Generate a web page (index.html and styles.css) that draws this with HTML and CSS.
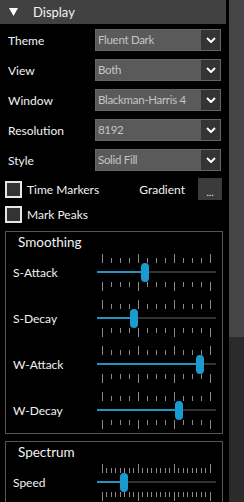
FILE: index.html
```html
<!DOCTYPE html>
<html lang="en">
<head>
    <meta charset="UTF-8">
    <meta name="viewport" content="width=device-width, initial-scale=1.0">
    <title>Display Settings</title>
    <link rel="stylesheet" href="styles.css">
</head>
<body>
    <div class="window">
        <div class="panel">
            <div class="section-header">
                <svg class="caret" width="9" height="9" viewBox="0 0 9 9"><polygon points="0,1 9,1 4.5,9" fill="#fff"/></svg>
                <span>Display</span>
            </div>

            <div class="settings">
                <div class="row">
                    <span class="label">Theme</span>
                    <div class="combo"><span class="combo-value">Fluent Dark</span><span class="combo-button"><svg width="10" height="6" viewBox="0 0 10 6"><polyline points="1,1 5,5 9,1" fill="none" stroke="#fff" stroke-width="2"/></svg></span></div>
                </div>
                <div class="row">
                    <span class="label">View</span>
                    <div class="combo"><span class="combo-value">Both</span><span class="combo-button"><svg width="10" height="6" viewBox="0 0 10 6"><polyline points="1,1 5,5 9,1" fill="none" stroke="#fff" stroke-width="2"/></svg></span></div>
                </div>
                <div class="row">
                    <span class="label">Window</span>
                    <div class="combo"><span class="combo-value">Blackman-Harris 4</span><span class="combo-button"><svg width="10" height="6" viewBox="0 0 10 6"><polyline points="1,1 5,5 9,1" fill="none" stroke="#fff" stroke-width="2"/></svg></span></div>
                </div>
                <div class="row">
                    <span class="label">Resolution</span>
                    <div class="combo"><span class="combo-value">8192</span><span class="combo-button"><svg width="10" height="6" viewBox="0 0 10 6"><polyline points="1,1 5,5 9,1" fill="none" stroke="#fff" stroke-width="2"/></svg></span></div>
                </div>
                <div class="row">
                    <span class="label">Style</span>
                    <div class="combo"><span class="combo-value">Solid Fill</span><span class="combo-button"><svg width="10" height="6" viewBox="0 0 10 6"><polyline points="1,1 5,5 9,1" fill="none" stroke="#fff" stroke-width="2"/></svg></span></div>
                </div>
            </div>

            <div class="check-row">
                <span class="checkbox"></span>
                <span class="check-label">Time Markers</span>
                <span class="gradient-label">Gradient</span>
                <span class="dots-button">...</span>
            </div>
            <div class="check-row second">
                <span class="checkbox"></span>
                <span class="check-label">Mark Peaks</span>
            </div>

            <div class="group">
                <div class="group-title">Smoothing</div>
                <div class="slider-row">
                    <span class="slider-label">S-Attack</span>
                    <div class="slider" style="--v: 0.39">
                        <div class="ticks top"></div>
                        <div class="track"><div class="fill"></div><div class="thumb"></div></div>
                        <div class="ticks bottom"></div>
                    </div>
                </div>
                <div class="slider-row">
                    <span class="slider-label">S-Decay</span>
                    <div class="slider" style="--v: 0.285">
                        <div class="ticks top"></div>
                        <div class="track"><div class="fill"></div><div class="thumb"></div></div>
                        <div class="ticks bottom"></div>
                    </div>
                </div>
                <div class="slider-row">
                    <span class="slider-label">W-Attack</span>
                    <div class="slider" style="--v: 0.895">
                        <div class="ticks top"></div>
                        <div class="track"><div class="fill"></div><div class="thumb"></div></div>
                        <div class="ticks bottom"></div>
                    </div>
                </div>
                <div class="slider-row">
                    <span class="slider-label">W-Decay</span>
                    <div class="slider" style="--v: 0.70">
                        <div class="ticks top"></div>
                        <div class="track"><div class="fill"></div><div class="thumb"></div></div>
                        <div class="ticks bottom"></div>
                    </div>
                </div>
            </div>

            <div class="group">
                <div class="group-title">Spectrum</div>
                <div class="slider-row">
                    <span class="slider-label">Speed</span>
                    <div class="slider" style="--v: 0.193">
                        <div class="ticks top fine"></div>
                        <div class="track"><div class="fill"></div><div class="thumb"></div></div>
                        <div class="ticks bottom fine"></div>
                    </div>
                </div>
            </div>
        </div>

        <div class="scrollbar"><div class="scroll-thumb"></div></div>
    </div>
</body>
</html>
```

FILE: styles.css
```css
html, body {
    margin: 0;
    padding: 0;
    background: #000;
    overflow: hidden;
}
body {
    font-family: Lato, "Noto Sans", sans-serif;
    font-size: 12px;
    color: #f2f2f2;
}
.window {
    display: flex;
    height: 502px;
}
.panel {
    width: 226px;
    flex: none;
}
.scrollbar {
    width: 15px;
    margin-left: 3px;
    background: #2b2b2b;
}
.scroll-thumb {
    height: 337px;
    background: #464646;
}

/* header */
.section-header {
    height: 24px;
    background: #414141;
    display: flex;
    align-items: center;
    padding-left: 9px;
    font-size: 13px;
}
.caret {
    margin-right: 15px;
    margin-top: -1px;
}

/* combo rows */
.settings {
    display: flex;
    flex-direction: column;
    gap: 8px;
    padding-top: 5px;
}
.row {
    display: flex;
    align-items: center;
    height: 22px;
}
.label {
    width: 87px;
    padding-left: 8px;
}
.combo {
    width: 126px;
    height: 22px;
    display: flex;
    background: #5a5a5a;
    box-sizing: border-box;
    border: 1px solid #646464;
}
.combo-value {
    flex: 1;
    padding-left: 2px;
    line-height: 20px;
    font-size: 11.5px;
    letter-spacing: -0.3px;
    color: #c4c4c4;
    white-space: nowrap;
    overflow: hidden;
}
.combo-button {
    width: 19px;
    background: #343434;
    display: flex;
    align-items: center;
    justify-content: center;
}

/* checkboxes */
.check-row {
    display: flex;
    align-items: center;
    height: 22px;
    margin-top: 7px;
    padding-left: 5px;
}
.check-row.second {
    margin-top: 6px;
    height: 17px;
}
.checkbox {
    width: 17px;
    height: 17px;
    box-sizing: border-box;
    border: 2px solid #e6e6e6;
    background: #333;
}
.check-label {
    margin-left: 5px;
    flex: 1;
}
.gradient-label {
    margin-right: 13px;
}
.dots-button {
    width: 24px;
    height: 22px;
    background: #3b3b3b;
    margin-right: 4px;
    display: flex;
    justify-content: center;
    align-items: flex-end;
    line-height: 16px;
    font-size: 10px;
}

/* group boxes */
.group {
    margin: 8px 0 0 5px;
    width: 218px;
    box-sizing: border-box;
    border: 1px solid #555;
    padding-bottom: 4px;
}
.group + .group {
    margin-top: 7px;
}
.group-title {
    height: 22px;
    line-height: 20px;
    padding-left: 12px;
    font-size: 13.5px;
}
.slider-row {
    display: flex;
    align-items: center;
    padding-left: 7px;
}
.slider-row + .slider-row {
    margin-top: 9px;
}
.slider-label {
    width: 84px;
}
.slider {
    width: 119px;
}
.ticks {
    margin-left: 5px;
    width: 110px;
    height: 9px;
    background-image:
        repeating-linear-gradient(to right, #8a8a8a 0 1px, transparent 1px 36px),
        repeating-linear-gradient(to right, #8a8a8a 0 1px, transparent 1px 9px);
    background-size: 100% 9px, 100% 5px;
    background-repeat: no-repeat;
}
.ticks.top {
    background-position: left bottom, left bottom;
}
.ticks.bottom {
    background-position: left top, left top;
}
.ticks.fine {
    background-image:
        repeating-linear-gradient(to right, #8a8a8a 0 1px, transparent 1px 36px),
        repeating-linear-gradient(to right, #8a8a8a 0 1px, transparent 1px 4.5px);
}
.track {
    position: relative;
    height: 19px;
}
.track::before {
    content: "";
    position: absolute;
    left: 0;
    right: 0;
    top: 8px;
    height: 2px;
    background: #333;
}
.fill {
    position: absolute;
    left: 0;
    top: 8px;
    height: 2px;
    width: calc(5.7px + var(--v) * 109px);
    background: #2196c4;
}
.thumb {
    position: absolute;
    top: 0;
    left: calc(1.7px + var(--v) * 109px);
    width: 8px;
    height: 19px;
    border-radius: 4px;
    background: #1a9bd0;
}
```
